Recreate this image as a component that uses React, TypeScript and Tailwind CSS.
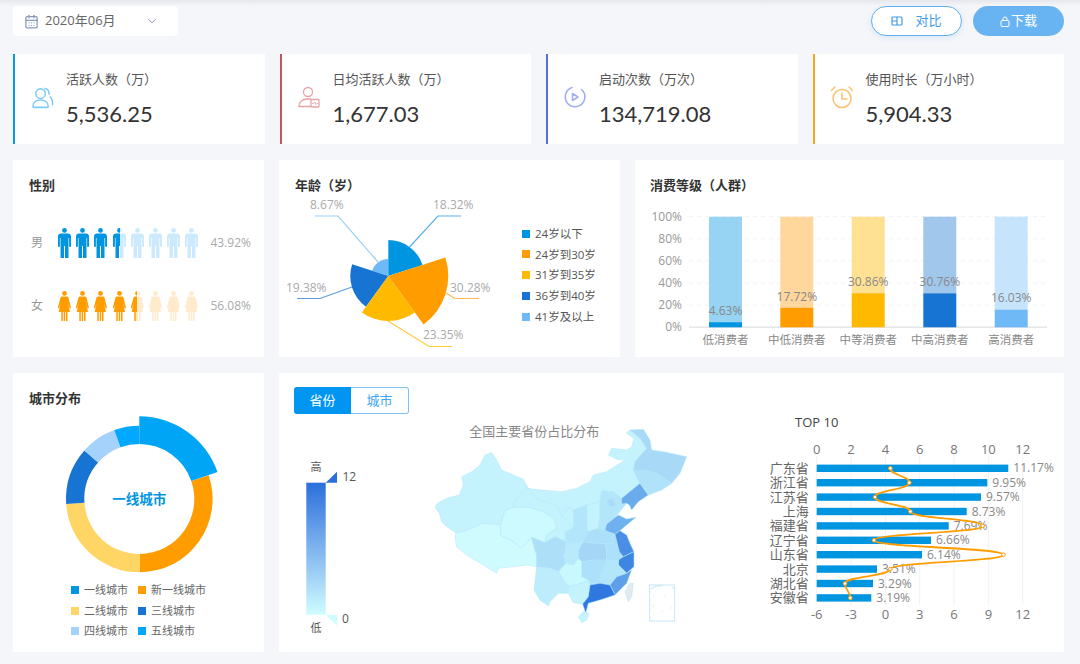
import { ReactNode } from "react"
import { CalendarDays, ChevronDown } from "lucide-react"

const font = "font-['Open_Sans','Noto_Sans_CJK_SC',sans-serif]"

// KPI cards
const kpis = [
  { label: "活跃人数（万）", value: "5,536.25", border: "border-l-[#0a9be6]", icon: <UsersIcon /> },
  { label: "日均活跃人数（万）", value: "1,677.03", border: "border-l-[#c2545f]", icon: <HealthIcon /> },
  { label: "启动次数（万次）", value: "134,719.08", border: "border-l-[#5b6fd8]", icon: <PlayIcon /> },
  { label: "使用时长（万小时）", value: "5,904.33", border: "border-l-[#f5a623]", icon: <ClockIcon /> },
]

function UsersIcon() {
  return (
    <svg width="23" height="23" viewBox="0 0 24 24" fill="none" stroke="#7ccbf8" strokeWidth="1.600" strokeLinecap="round">
      <circle cx="10" cy="8" r="5" />
      <path d="M2 21.500c0-4.500 3.500-7 8-7s8 2.500 8 7c0 .5-.3.8-.8.8H2.800c-.5 0-.8-.3-.8-.8z" />
      <path d="M14.500 2.500c2.800.5 4.500 3 4.300 6M20 11.500c2 1.800 2.800 4.500 2.500 8" />
    </svg>
  )
}

function HealthIcon() {
  return (
    <svg width="22" height="22" viewBox="0 0 22 22" fill="none" stroke="#e8a3a8" strokeWidth="1.300" strokeLinecap="round">
      <circle cx="10" cy="6" r="4.500" />
      <path d="M1 20c0-4 3.500-7 8-7h4" />
      <path d="M1 20.500h12" />
      <rect x="13" y="13.500" width="8" height="7.500" rx="1" />
      <path d="M14.500 17.500h1.500l1-1.500 1 2.500.7-1h1" strokeWidth="0.800" />
    </svg>
  )
}

function PlayIcon() {
  return (
    <svg width="22" height="22" viewBox="0 0 22 22" fill="none" stroke="#a3b0ec" strokeWidth="1.600" strokeLinecap="round" strokeLinejoin="round">
      <path d="M8 1.600A9.800 9.800 0 1 0 17.500 3.500" />
      <path d="M8.500 7.500v7l5.500-3.500z" />
    </svg>
  )
}

function ClockIcon() {
  return (
    <svg width="24" height="24" viewBox="0 0 24 24" fill="none" stroke="#fbc270" strokeWidth="1.500" strokeLinecap="round" strokeLinejoin="round">
      <circle cx="12" cy="13.500" r="9" />
      <path d="M12 8v6h5" />
      <path d="M1.500 5.500 5 2M22.500 5.500 19 2" />
    </svg>
  )
}

function Card({ className, children }: { className?: string; children: ReactNode }) {
  return <div className={`bg-white ${className ?? ""}`}>{children}</div>
}

function CardTitle({ children }: { children: ReactNode }) {
  return <h3 className="text-[13px] leading-5 font-bold text-[#333] mb-px">{children}</h3>
}

// gender pictograms
function Person({ female, fill }: { female?: boolean; fill: string }) {
  const d = female
    ? "M6.500 0a2.400 2.400 0 1 1 0 4.800a2.400 2.400 0 0 1 0-4.800zM4 5.500h5c.8 0 1.200.4 1.500 1l2.500 10.500l-1.300.4l-1.700-5.500l2 9H9.500v9H8v-9H7.200v9H5.700v-9H5l-.2 0v9H3.300v-9H0.700l2-9L1 17.400l-1.300-.4L2.500 6.500c.3-.6.700-1 1.500-1z"
    : "M6.500 0a2.400 2.400 0 1 1 0 4.800a2.400 2.400 0 0 1 0-4.800zM3 5.500h7c1.700 0 3 1.200 3 3v9.500c0 .6-.4 1-1 1s-.9-.4-.9-1v-8h-.6V30H7v-12H6v12H2.500V10h-.6v8c0 .6-.4 1-1 1S0 18.600 0 18V8.500c0-1.800 1.300-3 3-3z"
  return (
    <svg width="13" height="30" viewBox="0 0 13 30" className="overflow-visible">
      <path d={d} fill={fill} />
    </svg>
  )
}

function GenderRow({ label, percent, female, solid, light, partial }: { label: string; percent: string; female?: boolean; solid: string; light: string; partial: string }) {
  return (
    <div className="flex items-center h-[30px]">
      <span className="w-[24px] ml-[2px] text-[12px] text-[#999]">{label}</span>
      <div className="flex gap-[5.200px] ml-[3px] w-[140px]">
        {Array.from({ length: 8 }).map((_, i) => {
          const count = female ? 4 : 3
          const fill = i < count ? solid : i === count ? partial : light
          return <Person key={i} female={female} fill={fill} />
        })}
      </div>
      <span className="ml-auto text-[12px] text-[#aaa]">{percent}</span>
    </div>
  )
}

// polar helper, angle measured clockwise from 12 o'clock
function pt(cx: number, cy: number, r: number, deg: number) {
  const a = (deg * Math.PI) / 180
  return `${(cx + r * Math.sin(a)).toFixed(2)} ${(cy - r * Math.cos(a)).toFixed(2)}`
}

function sector(cx: number, cy: number, r0: number, r: number, a0: number, a1: number) {
  const large = a1 - a0 > 180 ? 1 : 0
  if (r0 === 0) return `M${cx} ${cy}L${pt(cx, cy, r, a0)}A${r} ${r} 0 ${large} 1 ${pt(cx, cy, r, a1)}Z`
  return `M${pt(cx, cy, r0, a0)}L${pt(cx, cy, r, a0)}A${r} ${r} 0 ${large} 1 ${pt(cx, cy, r, a1)}L${pt(cx, cy, r0, a1)}A${r0} ${r0} 0 ${large} 0 ${pt(cx, cy, r0, a0)}Z`
}

const ageLegend = [
  ["24岁以下", "#0095e0"],
  ["24岁到30岁", "#ff9c00"],
  ["31岁到35岁", "#ffba00"],
  ["36岁到40岁", "#1774d2"],
  ["41岁及以上", "#6fb9f7"],
]

function AgeRose() {
  const cx = 388.3
  const cy = 276
  return (
    <svg viewBox="279 196 220 161" className="w-[220px] h-[161px] block">
      <g fill="none" strokeWidth="1.200">
        <path d="M409.500 247L438 216H461" stroke="#56b4e9" />
        <path d="M446 293L455 298.500H479" stroke="#ffb84d" />
        <path d="M388 321L429 346.500H452" stroke="#ffcb40" />
        <path d="M352 287L320 298.500H297" stroke="#5a9de0" />
        <path d="M378 262L338 216H315" stroke="#9dd0f9" />
      </g>
      <path d={sector(cx, cy, 0, 17, 288, 360)} fill="#6fb9f7" />
      <path d={sector(cx, cy, 0, 38, 216, 288)} fill="#1774d2" />
      <path d={sector(cx, cy, 0, 45, 144, 216)} fill="#ffba00" />
      <path d={sector(cx, cy, 0, 36, 0, 72)} fill="#0095e0" />
      <path d={sector(cx, cy, 0, 60, 72, 144)} fill="#ff9c00" />
      <g fontSize="12" fill="#aaa">
        <text x="433" y="209">18.32%</text>
        <text x="450" y="292">30.28%</text>
        <text x="423" y="339">23.35%</text>
        <text x="286" y="292">19.38%</text>
        <text x="310" y="209">8.67%</text>
      </g>
    </svg>
  )
}

const bars = [
  { name: "低消费者", v: 4.63, x: 709, dark: "#0095e0", light: "#97d4f4", ly: 311 },
  { name: "中低消费者", v: 17.72, x: 780.300, dark: "#ff9c00", light: "#ffd69b", ly: 296.700 },
  { name: "中等消费者", v: 30.86, x: 851.700, dark: "#ffba00", light: "#ffe194", ly: 282 },
  { name: "中高消费者", v: 30.76, x: 923.300, dark: "#1774d2", light: "#a1c7ec", ly: 282 },
  { name: "高消费者", v: 16.03, x: 994.700, dark: "#6fb9f7", light: "#c7e4fd", ly: 298 },
]

function ConsumeChart() {
  const top = 216.7
  const bottom = 327.3
  const h = bottom - top
  return (
    <svg viewBox="635 196 429 161" className="w-[429px] h-[161px] block">
      {[0, 20, 40, 60, 80, 100].map((t) => {
        const y = bottom - (h * t) / 100
        return (
          <g key={t}>
            {t > 0 && <line x1="689" x2="1047" y1={y} y2={y} stroke="#f1f2f5" strokeDasharray="4 4" />}
            <text x="682" y={y + 4} textAnchor="end" fontSize="12" fill="#999">{t}%</text>
          </g>
        )
      })}
      <line x1="689" x2="1047" y1={bottom} y2={bottom} stroke="#e4e6ea" strokeWidth="1.500" />
      {bars.map((b) => {
        const bh = (h * b.v) / 100
        return (
          <g key={b.name}>
            <rect x={b.x} y={top} width="33" height={h - bh} fill={b.light} />
            <rect x={b.x} y={bottom - bh} width="33" height={bh} fill={b.dark} />
            <text x={b.x + 16.500} y={b.ly + 4} textAnchor="middle" fontSize="12" fill="#888">{b.v.toFixed(2)}%</text>
            <text x={b.x + 16.500} y="344" textAnchor="middle" fontSize="11.500" fill="#888">{b.name}</text>
          </g>
        )
      })}
    </svg>
  )
}

const cityLegend = [
  ["一线城市", "#0095e0"],
  ["新一线城市", "#ff9c00"],
  ["二线城市", "#ffd666"],
  ["三线城市", "#1774d2"],
  ["四线城市", "#a5d2fa"],
  ["五线城市", "#00a8ff"],
]

function CityDonut() {
  const cx = 100.300
  const cy = 87
  return (
    <svg viewBox="0 0 200 170" className="w-[200px] h-[170px] block">
      <path d={sector(cx, cy, 55, 73.300, 71, 179.500)} fill="#ff9c00" />
      <path d={sector(cx, cy, 55, 73.300, 179.500, 266)} fill="#ffd666" />
      <path d={sector(cx, cy, 55, 73.300, 266, 311.500)} fill="#1774d2" />
      <path d={sector(cx, cy, 55, 73.300, 311.500, 340)} fill="#a5d2fa" />
      <path d={sector(cx, cy, 55, 73.300, 340, 360)} fill="#00a8ff" />
      <path d={sector(cx, cy, 55, 82.700, 0, 71)} fill="#00a5f5" />
      <text x={cx} y={cy + 5} textAnchor="middle" fontSize="13.500" fontWeight="700" fill="#0095e0">一线城市</text>
    </svg>
  )
}

// hand traced provinces, coordinates at 3x of the 270x210 box
const provinces: [string, string][] = [
  ["#c5f3fd", "15,262 22,250 50,235 88,225 100,195 95,170 125,155 150,135 165,105 185,98 200,120 215,150 250,165 280,178 295,205 270,222 250,250 250,262 225,272 212,315 160,310 100,335 78,338 50,320 35,305 28,280"],
  ["#cffbff", "78,338 100,335 160,310 212,315 212,345 250,365 275,385 305,352 310,375 320,405 320,440 290,435 250,440 205,445 200,460 160,435 110,405 80,380 75,350"],
  ["#ccfaff", "225,272 250,262 300,262 340,275 372,295 380,325 350,345 345,368 305,352 275,385 250,365 212,345 212,315"],
  ["#c5f3fd", "295,205 320,235 345,245 385,262 395,290 415,305 430,325 405,335 408,365 375,350 345,368 350,345 380,325 372,295 340,275 300,262 250,262 250,250 270,222"],
  ["#c5f3fd", "295,205 310,208 395,215 440,205 480,185 490,165 530,155 585,120 560,118 535,105 545,85 590,90 605,80 612,55 590,40 600,30 630,55 650,85 615,125 610,150 630,190 575,235 550,215 515,212 510,245 470,255 430,270 415,262 395,290 385,262 345,245 320,235"],
  ["#c5f3fd", "395,290 415,262 430,270 432,300 430,325 415,305"],
  ["#b3e6fb", "430,270 470,255 472,295 472,335 460,365 415,372 408,365 405,335 430,325 432,300"],
  ["#c5f3fd", "470,255 510,245 510,285 505,325 472,335 472,295"],
  ["#b3e6fb", "510,245 515,212 550,215 575,235 575,252 590,250 565,280 552,295 530,312 525,332 505,325 510,285"],
  ["#a9dbf8", "530,240 548,235 558,255 540,262"],
  ["#6aabec", "575,235 630,190 655,225 625,245 605,270 598,255 590,250 575,252"],
  ["#b0e2fa", "610,150 640,150 680,160 725,190 695,210 655,225 630,190"],
  ["#a8daf8", "590,40 600,30 640,28 660,60 665,90 700,95 770,110 750,160 725,190 680,160 640,150 610,150 615,125 650,85 630,55 600,30"],
  ["#6fb0ee", "530,312 552,295 565,285 590,297 618,292 590,315 570,332 555,343 525,332"],
  ["#acdff9", "472,335 505,325 525,332 555,343 545,350 550,370 525,370 510,372 460,365"],
  ["#a5d6f7", "460,365 510,372 525,370 530,395 530,420 495,420 455,425 445,415 445,390"],
  ["#ade0fa", "545,350 555,343 568,395 580,410 565,420 530,420 530,395 525,370 550,370"],
  ["#4a8fe5", "555,343 570,332 590,345 600,370 612,395 580,410 568,395"],
  ["#3f86e3", "580,410 612,395 612,440 590,460 565,435 565,420"],
  ["#b8eafc", "408,365 415,372 460,365 445,390 445,415 430,435 408,430 400,410 405,390"],
  ["#addff9", "305,352 345,368 375,350 408,365 405,390 400,410 408,430 385,455 360,445 320,440 320,405 310,375"],
  ["#b3e6fb", "530,420 565,420 565,435 590,460 560,470 540,495 510,490 510,470"],
  ["#5f9fe8", "590,460 605,450 590,490 555,525 540,495 560,470"],
  ["#ade0fa", "455,425 495,420 530,420 510,470 510,490 480,495 475,480 455,470"],
  ["#c9f8fe", "385,455 408,430 430,435 445,415 455,425 455,470 475,480 440,495 415,500 400,480"],
  ["#bdedfd", "320,440 360,445 385,455 400,480 415,500 415,520 385,520 360,545 355,558 330,540 312,510"],
  ["#c5f3fd", "415,500 440,495 475,480 480,495 490,490 475,530 458,552 430,548 420,530 415,520"],
  ["#2f78e0", "480,495 510,490 540,495 555,525 510,540 475,550 467,580 458,552 475,530"],
  ["#c5f3fd", "445,590 460,575 477,580 470,600 455,608"],
  ["#e3e9ee", "600,490 610,490 605,530 595,545 585,515"],
]

function ChinaMap() {
  return (
    <svg viewBox="0 0 810 630" className="w-[270px] h-[210px] block">
      {provinces.map(([fill, points], i) => (
        <polygon key={i} points={points} fill={fill} stroke="#aee6fb" strokeWidth="1.500" strokeLinejoin="round" />
      ))}
      <g fill="none" stroke="#c5e6f8">
        <rect x="659" y="495" width="75" height="108" strokeWidth="3" />
        <path d="M662 507q15-12 35-10M725 500l7 7" strokeWidth="3" />
        <path d="M672 525l-2 8M705 525l-3 5M670 555l-2 8M700 572l-8 6M727 560l-5 8M672 580l-4 7" strokeWidth="2.500" strokeDasharray="4 3" />
      </g>
      <text x="313" y="49" textAnchor="middle" fontSize="39" fill="#888">全国主要省份占比分布</text>
    </svg>
  )
}

function VisualMap() {
  return (
    <svg width="70" height="180" viewBox="296 458 70 180" className="block">
      <defs>
        <linearGradient id="range" x1="0" y1="0" x2="0" y2="1">
          <stop offset="0" stopColor="#2a6fdc" />
          <stop offset="0.5" stopColor="#7fb4ee" />
          <stop offset="1" stopColor="#cffcff" />
        </linearGradient>
      </defs>
      <rect x="306.300" y="482.700" width="19.400" height="132" fill="url(#range)" />
      <polygon points="325.700,482.700 337,471.700 337,482.700" fill="#2a6fdc" />
      <polygon points="325.700,614.700 337,614.700 337,625.700" fill="#cffcff" />
      <text x="316" y="471" textAnchor="middle" fontSize="11" fill="#555">高</text>
      <text x="342.500" y="480.500" fontSize="12" fill="#555">12</text>
      <text x="342" y="623" fontSize="12" fill="#555">0</text>
      <text x="316" y="632" textAnchor="middle" fontSize="11" fill="#555">低</text>
    </svg>
  )
}

const top10 = [
  { name: "广东省", label: "11.17%", end: 1008.300, lx: 421 },
  { name: "浙江省", label: "9.95%", end: 987.300, lx: 478 },
  { name: "江苏省", label: "9.57%", end: 981, lx: 375 },
  { name: "上海", label: "8.73%", end: 966.700, lx: 481 },
  { name: "福建省", label: "7.69%", end: 948.700, lx: 698 },
  { name: "辽宁省", label: "6.66%", end: 931, lx: 372 },
  { name: "山东省", label: "6.14%", end: 922, lx: 760 },
  { name: "北京", label: "3.51%", end: 877, lx: 421 },
  { name: "湖北省", label: "3.29%", end: 873, lx: 285 },
  { name: "安徽省", label: "3.19%", end: 871.300, lx: 301 },
]

function Top10() {
  const x0 = 816.7
  const step = 34.33
  const ys = top10.map((_, i) => 468.3 + i * 14.4)
  const xs = top10.map((t) => 750 + t.lx / 3)
  let line = `M${xs[0]} ${ys[0]}`
  for (let i = 1; i < xs.length; i++) {
    const mid = (ys[i - 1] + ys[i]) / 2
    line += `C${xs[i - 1]} ${mid} ${xs[i]} ${mid} ${xs[i]} ${ys[i]}`
  }
  return (
    <svg viewBox="750 405 310 225" className="w-[310px] h-[225px] block">
      <text x="795" y="427" fontSize="13" fill="#444">TOP 10</text>
      {[0, 1, 2, 3, 4, 5, 6].map((i) => (
        <g key={i}>
          <line x1={x0 + i * step} x2={x0 + i * step} y1="455" y2="605" stroke="#f0f2f4" />
          <text x={x0 + i * step} y="454" textAnchor="middle" fontSize="13" fill="#777">{i * 2}</text>
          <text x={x0 + i * step} y="619" textAnchor="middle" fontSize="13" fill="#777">{i * 3 - 6}</text>
        </g>
      ))}
      {top10.map((t, i) => (
        <g key={t.name}>
          <rect x={x0} y={ys[i] - 3.7} width={t.end - x0} height="7.400" fill="#0095e0" />
          <text x="808.700" y={ys[i] + 4.500} textAnchor="end" fontSize="13" fill="#666">{t.name}</text>
          <text x={t.end + 5} y={ys[i] + 4} fontSize="12" fill="#888">{t.label}</text>
        </g>
      ))}
      <path d={line} fill="none" stroke="#ff9c00" strokeWidth="1.800" />
      {xs.map((x, i) => (
        <circle key={i} cx={x} cy={ys[i]} r="1.800" fill="#fff" stroke="#ff9c00" strokeWidth="1" />
      ))}
    </svg>
  )
}

export default function App() {
  return (
    <div className={`w-[1080px] h-[664px] overflow-hidden bg-[#f5f6fa] ${font}`}>
      <div className="h-[6px] bg-gradient-to-b from-[#e6e7ec] to-[#f5f6fa]" />
      {/* toolbar */}
      <div className="flex items-center justify-between h-[30px] pl-[13px] pr-[16px]">
        <div className="flex items-center w-[165px] h-[30px] bg-white rounded-[4px] pl-[11px] pr-[19px] text-[#666] text-[13px]">
          <CalendarDays size={15} className="text-[#8a9bb8]" />
          <span className="ml-[6px]">2020年06月</span>
          <ChevronDown size={14} strokeWidth={1.500} className="ml-auto text-[#7a88aa]" />
        </div>
        <div className="flex gap-[11px]">
          <button className="flex items-center justify-center w-[91px] h-[30px] rounded-full bg-white border border-[#5eb0f0] text-[#3e9bea] text-[13px] shadow-[0_2px_6px_rgba(90,170,240,0.18)]">
            <svg width="12" height="10" viewBox="0 0 12 10" fill="none" stroke="#3e9bea" strokeWidth="1.200">
              <rect x="1" y="1" width="10" height="8" rx="1" />
              <path d="M6 1v8M1 5h5" />
            </svg>
            <span className="ml-[12px]">对比</span>
          </button>
          <button className="flex items-center justify-center w-[91px] h-[30px] rounded-full bg-[#68b4f2] text-white text-[13px]">
            <svg width="10" height="11" viewBox="0 0 10 11" fill="none" stroke="#fff" strokeWidth="1">
              <rect x="1" y="4.500" width="8" height="6" rx="1" />
              <path d="M3 4.500V3a2 2 0 0 1 4 0v1.500" />
            </svg>
            <span className="ml-[1px]">下载</span>
          </button>
        </div>
      </div>

      <div className="flex flex-col gap-[16px] pl-[13px] pr-[16px] pt-[18px]">
        {/* KPI row */}
        <div className="flex gap-[15px] h-[90px]">
          {kpis.map((k) => (
            <Card key={k.label} className={`flex-1 flex items-center border-l-[2.500px] ${k.border}`}>
              <div className="w-[24px] ml-[15px] flex justify-center mt-[-4px]">{k.icon}</div>
              <div className="ml-[12px]">
                <div className="text-[13px] leading-5 text-[#555] mt-[-1px]">{k.label}</div>
                <div className="font-['Lato',sans-serif] text-[22px] leading-7 text-[#333] mt-[11px]">{k.value}</div>
              </div>
            </Card>
          ))}
        </div>

        {/* charts row */}
        <div className="flex gap-[15px] h-[197px]">
          <Card className="w-[251px] pt-[15px] pl-[16px] pr-[13px]">
            <CardTitle>性别</CardTitle>
            <div className="flex flex-col gap-[33px] mt-[33px]">
              <GenderRow label="男" percent="43.92%" solid="#0095e0" light="#cceafb" partial="url(#maleSplit)" />
              <GenderRow label="女" percent="56.08%" female solid="#ff9c00" light="#ffeacc" partial="url(#femaleSplit)" />
            </div>
            <svg width="0" height="0" className="absolute">
              <defs>
                <linearGradient id="maleSplit">
                  <stop offset="0.5" stopColor="#0095e0" />
                  <stop offset="0.5" stopColor="#cceafb" />
                </linearGradient>
                <linearGradient id="femaleSplit">
                  <stop offset="0.5" stopColor="#ff9c00" />
                  <stop offset="0.5" stopColor="#ffeacc" />
                </linearGradient>
              </defs>
            </svg>
          </Card>

          <Card className="w-[341px]">
            <div className="pt-[15px] px-[16px]"><CardTitle>年龄（岁）</CardTitle></div>
            <div className="flex">
              <AgeRose />
              <ul className="flex flex-col gap-[3.800px] pl-[23px] pt-[29px]">
                {ageLegend.map(([name, color]) => (
                  <li key={name} className="flex items-center h-[17px] text-[11.500px] text-[#555]">
                    <span className="w-[8px] h-[8px] mr-[5px]" style={{ background: color }} />
                    {name}
                  </li>
                ))}
              </ul>
            </div>
          </Card>

          <Card className="flex-1">
            <div className="pt-[15px] px-[15px]"><CardTitle>消费等级（人群）</CardTitle></div>
            <ConsumeChart />
          </Card>
        </div>

        {/* bottom row */}
        <div className="flex gap-[15px] h-[279px]">
          <Card className="w-[251px] pt-[15px] px-[16px]">
            <CardTitle>城市分布</CardTitle>
            <div className="ml-[10px] mt-[4px]"><CityDonut /></div>
            <div className="grid grid-cols-[67px_auto] gap-y-[4px] ml-[42px] mt-[0px] text-[11px] text-[#666]">
              {cityLegend.map(([name, color]) => (
                <div key={name} className="flex items-center h-[16.500px]">
                  <span className="w-[8px] h-[8px] mr-[5px]" style={{ background: color }} />
                  {name}
                </div>
              ))}
            </div>
          </Card>

          <Card className="flex-1 flex pt-[14px] pl-[15px]">
            <div className="w-[136px]">
              <div className="flex w-[115px] h-[26.500px] text-[13px]">
                <div className="flex-1 flex items-center justify-center bg-[#0095f0] text-white rounded-l-[3px]">省份</div>
                <div className="flex-1 flex items-center justify-center bg-white text-[#3ea6f0] border border-l-0 border-[#7cc3f5] rounded-r-[3px]">城市</div>
              </div>
              <div className="mt-[44px] ml-[2px]"><VisualMap /></div>
            </div>
            <div className="mt-[33px] w-[320px]"><ChinaMap /></div>
            <div className="mt-[18px]"><Top10 /></div>
          </Card>
        </div>
      </div>
    </div>
  )
}
